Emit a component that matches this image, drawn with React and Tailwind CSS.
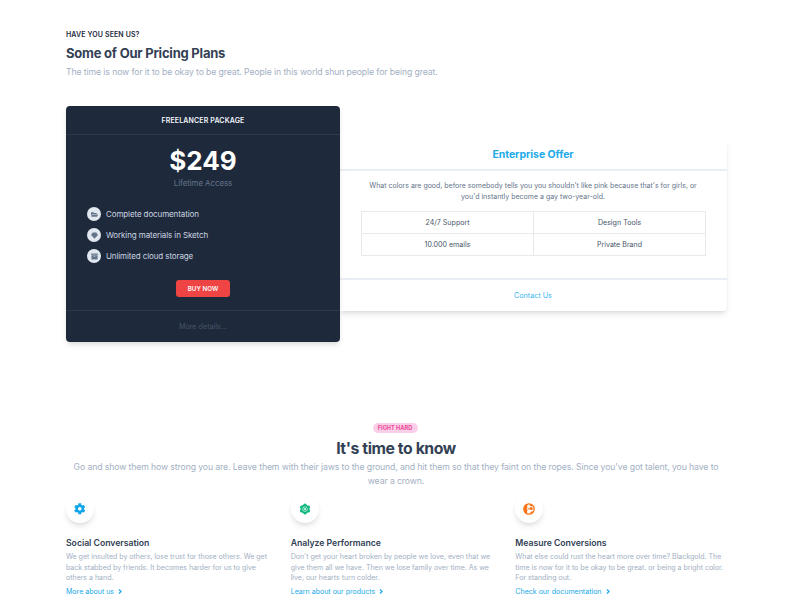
import { FaCog, FaFolderOpen, FaArchive } from "react-icons/fa";

function DiamondIcon({ className }) {
  return (
    <svg viewBox="0 0 24 24" className={className} fill="currentColor">
      <path d="M6 2 H18 L24 10 L12 23 L0 10 Z" />
    </svg>
  );
}

const perks = [
  { icon: FaFolderOpen, label: "Complete documentation" },
  { icon: DiamondIcon, label: "Working materials in Sketch" },
  { icon: FaArchive, label: "Unlimited cloud storage" },
];

function GearIcon() {
  return <FaCog className="mr-px size-[11.5px] text-[#0ea5e9]" />;
}

function MoleculeIcon() {
  return (
    <svg viewBox="0 0 24 24" className="size-3 text-[#10b981]" fill="none" stroke="currentColor">
      <path d="M12 4 L19 8 V16 L12 20 L5 16 V8 Z" strokeWidth="4" />
      <circle cx="12" cy="12" r="3" strokeWidth="2.2" />
      <g fill="currentColor" stroke="none">
        <circle cx="12" cy="3.8" r="3" />
        <circle cx="19" cy="7.8" r="3" />
        <circle cx="19" cy="16.2" r="3" />
        <circle cx="12" cy="20.2" r="3" />
        <circle cx="5" cy="16.2" r="3" />
        <circle cx="5" cy="7.8" r="3" />
      </g>
    </svg>
  );
}

function GlobeIcon() {
  return (
    <svg viewBox="0 0 24 24" className="size-3 text-[#f97316]" fill="currentColor">
      <circle cx="12" cy="12" r="10.4" fill="none" stroke="currentColor" strokeWidth="2.6" />
      <path d="M11 2 C5 2 2 7 2 12 C2 18 6 22 9 22 L8 18 L9 14 L7 12 L9 9 L8 6 Z" />
      <path d="M9 11 L13 11 L15 8 L19 9 L20 13 L17 14 L14 13 L9 13 Z" />
      <path d="M14 2 L20 6 L17 7 L13 5 Z" />
      <path d="M15 18 L19 16 L19 19 L14 21 Z" />
    </svg>
  );
}

const features = [
  {
    icon: GearIcon,
    title: "Social Conversation",
    lines: [
      "We get insulted by others, lose trust for those others. We get",
      "back stabbed by friends. It becomes harder for us to give",
      "others a hand.",
    ],
    link: "More about us",
  },
  {
    icon: MoleculeIcon,
    title: "Analyze Performance",
    lines: [
      "Don't get your heart broken by people we love, even that we",
      "give them all we have. Then we lose family over time. As we",
      "live, our hearts turn colder.",
    ],
    link: "Learn about our products",
  },
  {
    icon: GlobeIcon,
    title: "Measure Conversions",
    lines: [
      "What else could rust the heart more over time? Blackgold. The",
      "time is now for it to be okay to be great. or being a bright color.",
      "For standing out.",
    ],
    link: "Check our documentation",
  },
];

function FreelancerCard() {
  return (
    <div className="z-10 flex h-[236px] w-[274px] flex-col rounded bg-[#1e293b] text-center shadow-md">
      <div className="flex h-[29px] items-center justify-center border-b border-[#2c3a4e] pt-[2px] text-[7px] font-semibold tracking-[0.14px] text-slate-100">
        FREELANCER PACKAGE
      </div>
      <div className="mt-[10px] h-8 text-[26px] leading-8 font-bold text-white">$249</div>
      <div className="h-3 text-[8px] leading-3 tracking-[-0.12px] text-[#64748b]">Lifetime Access</div>
      <div className="mt-[18px] ml-[21px] flex flex-col gap-[7px]">
        {perks.map(({ icon: Icon, label }) => (
          <div key={label} className="flex h-[14px] items-center gap-[5px]">
            <span className="flex size-[14px] items-center justify-center rounded-full bg-slate-200">
              <Icon className="size-[7px] text-[#64748b]" />
            </span>
            <span className="text-[8px] tracking-[-0.11px] text-[#cbd5e1]">{label}</span>
          </div>
        ))}
      </div>
      <button className="mt-[17px] flex h-[17px] w-[54px] items-center justify-center self-center rounded-[3px] bg-[#ef4444] text-[6.2px] font-semibold tracking-[0.05px] text-white">
        BUY NOW
      </button>
      <div className="mt-auto flex h-[32px] items-center justify-center border-t border-[#2c3a4e] pt-px text-[7.2px] text-[#475569]">
        More details...
      </div>
    </div>
  );
}

function EnterpriseCard() {
  return (
    <div className="mt-[33px] flex h-[172px] w-[387px] flex-col rounded-r bg-white text-center shadow-md">
      <div className="flex h-8 items-center justify-center border-b-2 border-[#e9eef5] pr-px pt-px text-[10.5px] font-bold tracking-[-0.05px] text-[#22aaea]">
        Enterprise Offer
      </div>
      <div className="mt-[9px] pr-px text-[7px] leading-[11px] text-[#64748b]">
        <p className="whitespace-nowrap">
          What colors are good, before somebody tells you you shouldn't like pink because that's for girls, or
        </p>
        <p>you'd instantly become a gay two-year-old.</p>
      </div>
      <div className="mx-[21px] mt-[9px] grid h-[45px] grid-cols-2 border-t border-l border-[#e7e9ec] text-[7.1px] text-[#475569]">
        {["24/7 Support", "Design Tools", "10.000 emails", "Private Brand"].map((item) => (
          <div key={item} className="flex items-center justify-center border-r border-b border-[#e7e9ec] pt-px">
            {item}
          </div>
        ))}
      </div>
      <div className="mt-auto flex h-[33px] items-center justify-center border-t-2 border-[#e9eef5] pt-px pr-px text-[7.2px] text-[#38b6f2]">
        Contact Us
      </div>
    </div>
  );
}

export default function App() {
  return (
    <main className="h-[600px] w-[800px] overflow-hidden bg-white px-[66px] pt-[29px] font-['Inter',sans-serif]">
      <header className="flex flex-col whitespace-nowrap">
        <span className="h-3 text-[7px] leading-3 font-semibold tracking-[0.12px] text-[#1e293b]">HAVE YOU SEEN US?</span>
        <h2 className="mt-1 h-4 text-[13px] leading-4 font-bold tracking-[-0.22px] text-[#334155]">Some of Our Pricing Plans</h2>
        <p className="mt-[5px] h-3 text-[8.7px] leading-3 tracking-[-0.11px] text-[#a3b0c3]">
          The time is now for it to be okay to be great. People in this world shun people for being great.
        </p>
      </header>
      <section className="mt-[28px] flex w-[661px] items-start">
        <FreelancerCard />
        <EnterpriseCard />
      </section>
      <section className="mt-[81px] flex w-[660px] flex-col items-center">
        <span className="-ml-[2px] flex h-[10px] w-[45px] items-center justify-center rounded-full bg-[#fbcfe8] text-[5.6px] font-bold text-[#ec4899]">
          FIGHT HARD
        </span>
        <h2 className="mt-[6px] h-5 text-[15.8px] leading-5 font-bold tracking-[-0.42px] text-[#334155]">It's time to know</h2>
        <div className="mt-px text-center text-[8.7px] leading-[14px] tracking-[-0.11px] whitespace-nowrap text-[#a3b0c3]">
          <p>
            Go and show them how strong you are. Leave them with their jaws to the ground, and hit them so that they faint on the ropes. Since you've got talent, you have to
          </p>
          <p>wear a crown.</p>
        </div>
      </section>
      <section className="mt-[7px] grid w-[674px] grid-cols-3">
        {features.map(({ icon: Icon, title, lines, link }) => (
          <article key={title} className="whitespace-nowrap">
            <div className="flex size-7 items-center justify-center rounded-full bg-white shadow-md">
              <Icon />
            </div>
            <h3 className="mt-[14px] h-3 text-[8.7px] leading-3 font-semibold tracking-[-0.03px] text-[#334155]">{title}</h3>
            <div className="mt-[2px] pt-px text-[7.05px] leading-[10.6px] tracking-[-0.02px] text-[#a3b0c3]">
              {lines.map((line) => (
                <p key={line}>{line}</p>
              ))}
            </div>
            <a className="mt-[2px] flex h-3 items-center gap-1 text-[7.05px] text-[#22aaea]">
              {link}
              <svg viewBox="0 0 8 10" className="h-[5px] w-1" fill="none" stroke="currentColor" strokeWidth="2.6">
                <path d="M2 1 L6 5 L2 9" />
              </svg>
            </a>
          </article>
        ))}
      </section>
    </main>
  );
}
